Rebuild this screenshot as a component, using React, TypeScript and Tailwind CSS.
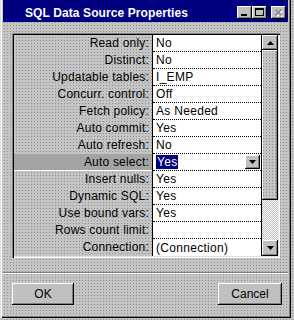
const dither =
  "bg-[#c4c4c4] bg-[radial-gradient(#909090_0.55px,transparent_0.75px)] bg-[length:3px_3px]";
const raised =
  "shadow-[inset_-1px_-1px_#000,inset_1px_1px_#fff,inset_-2px_-2px_#808080]";

const ROWS: [string, string][] = [
  ["Read only:", "No"],
  ["Distinct:", "No"],
  ["Updatable tables:", "I_EMP"],
  ["Concurr. control:", "Off"],
  ["Fetch policy:", "As Needed"],
  ["Auto commit:", "Yes"],
  ["Auto refresh:", "No"],
  ["Auto select:", "Yes"],
  ["Insert nulls:", "Yes"],
  ["Dynamic SQL:", "Yes"],
  ["Use bound vars:", "Yes"],
  ["Rows count limit:", ""],
  ["Connection:", "(Connection)"],
];

const SELECTED = 7;

const DownArrow = () => (
  <svg width="7" height="5" viewBox="0 0 7 5">
    <path d="M0 0h7L3.5 4z" fill="#000" />
  </svg>
);

const UpArrow = () => (
  <svg width="7" height="4" viewBox="0 0 7 4">
    <path d="M3.5 0L7 4H0z" fill="#000" />
  </svg>
);

const CaptionButton = ({ children }: { children: React.ReactNode }) => (
  <div className={`w-[15px] h-[13px] bg-[#c0c0c0] ${raised} relative`}>{children}</div>
);

export default function App() {
  return (
    <div
      className={`w-[294px] h-[320px] ${dither} font-['Liberation_Sans',Arial,sans-serif] text-[12px] text-black overflow-hidden`}
    >
      <div className="w-[291px] h-[318px] flex flex-col shadow-[inset_1px_0_#dfdfdf,inset_2px_0_#fff,inset_-1px_-1px_#000,inset_-2px_-2px_#808080]">
        {/* title bar */}
        <div className="mx-[3px] h-[22px] pt-[3px] bg-[#000080] flex items-center">
          <span className="ml-[22px] text-white font-bold text-[12px] tracking-[0.1px]">
            SQL Data Source Properties
          </span>
          <div className="ml-auto mr-[2px] flex items-center">
            <CaptionButton>
              <div className="absolute left-[4px] top-[8px] w-[6px] h-[2px] bg-black" />
            </CaptionButton>
            <CaptionButton>
              <div className="absolute left-[3px] top-[2px] w-[9px] h-[8px] border border-black border-t-2" />
            </CaptionButton>
            <div className="w-[4px]" />
            <CaptionButton>
              <svg className="absolute left-[3px] top-[2px]" width="10" height="9" viewBox="0 0 10 9">
                <path d="M1.5 1.5l6 6M7.5 1.5l-6 6" stroke="#fff" strokeWidth="1.6" transform="translate(1 1)" />
                <path d="M1.5 1.5l6 6M7.5 1.5l-6 6" stroke="#808080" strokeWidth="1.6" />
              </svg>
            </CaptionButton>
          </div>
        </div>

        {/* property grid */}
        <div className="ml-[12px] mt-[11px] w-[268px] p-[2px] flex shadow-[inset_1px_1px_#808080,inset_2px_2px_#000,inset_-1px_-1px_#fff,inset_-2px_-2px_#dfdfdf]">
          <div className="w-[138px] flex flex-col">
            {ROWS.map(([label], i) => (
              <div
                key={label}
                className={`h-[17px] leading-[17px] text-right pr-[3px] tracking-[0.2px] ${
                  i === SELECTED ? "bg-[#a4a4a4] border-b border-white leading-[16px]" : ""
                }`}
              >
                {label}
              </div>
            ))}
          </div>
          <div className="w-[109px] bg-white border-l border-black flex flex-col">
            {ROWS.map(([label, value], i) => (
              <div
                key={label}
                className={`h-[17px] leading-[16px] pl-[3px] flex items-center tracking-[0.3px] ${
                  i < ROWS.length - 1 ? "border-b border-dotted border-black" : ""
                }`}
              >
                {i === SELECTED ? (
                  <>
                    <span className="bg-[#000080] text-white px-[1px] h-[14px] leading-[14px]">{value}</span>
                    <div className={`ml-auto mr-[1px] w-[15px] h-[14px] bg-[#c0c0c0] ${raised} flex items-center justify-center`}>
                      <DownArrow />
                    </div>
                  </>
                ) : (
                  <span>{value}</span>
                )}
              </div>
            ))}
          </div>
          <div className="w-[17px] flex flex-col border-l border-black">
            <div className={`h-[15px] bg-[#c0c0c0] ${raised} flex items-center justify-center`}>
              <UpArrow />
            </div>
            <div className={`h-[150px] ${dither} ${raised}`} />
            <div className="flex-1 bg-[#c0c0c0] bg-[repeating-conic-gradient(#c0c0c0_0_25%,#ffffff_0_50%)] bg-[length:2px_2px]" />
            <div className={`h-[16px] bg-[#c0c0c0] ${raised} flex items-center justify-center`}>
              <DownArrow />
            </div>
          </div>
        </div>

        {/* separator */}
        <div className="mx-[3px] mt-[14px] h-[2px] border-t border-[#808080] border-b border-b-white" />

        {/* buttons */}
        <div className="mt-[9px] pl-[12px] pr-[9px] flex justify-between">
          <button className={`w-[62px] h-[22px] bg-[#c0c0c0] ${raised} text-[12px]`}>OK</button>
          <button className={`w-[64px] h-[22px] bg-[#c0c0c0] ${raised} text-[12px]`}>Cancel</button>
        </div>
      </div>
    </div>
  );
}
